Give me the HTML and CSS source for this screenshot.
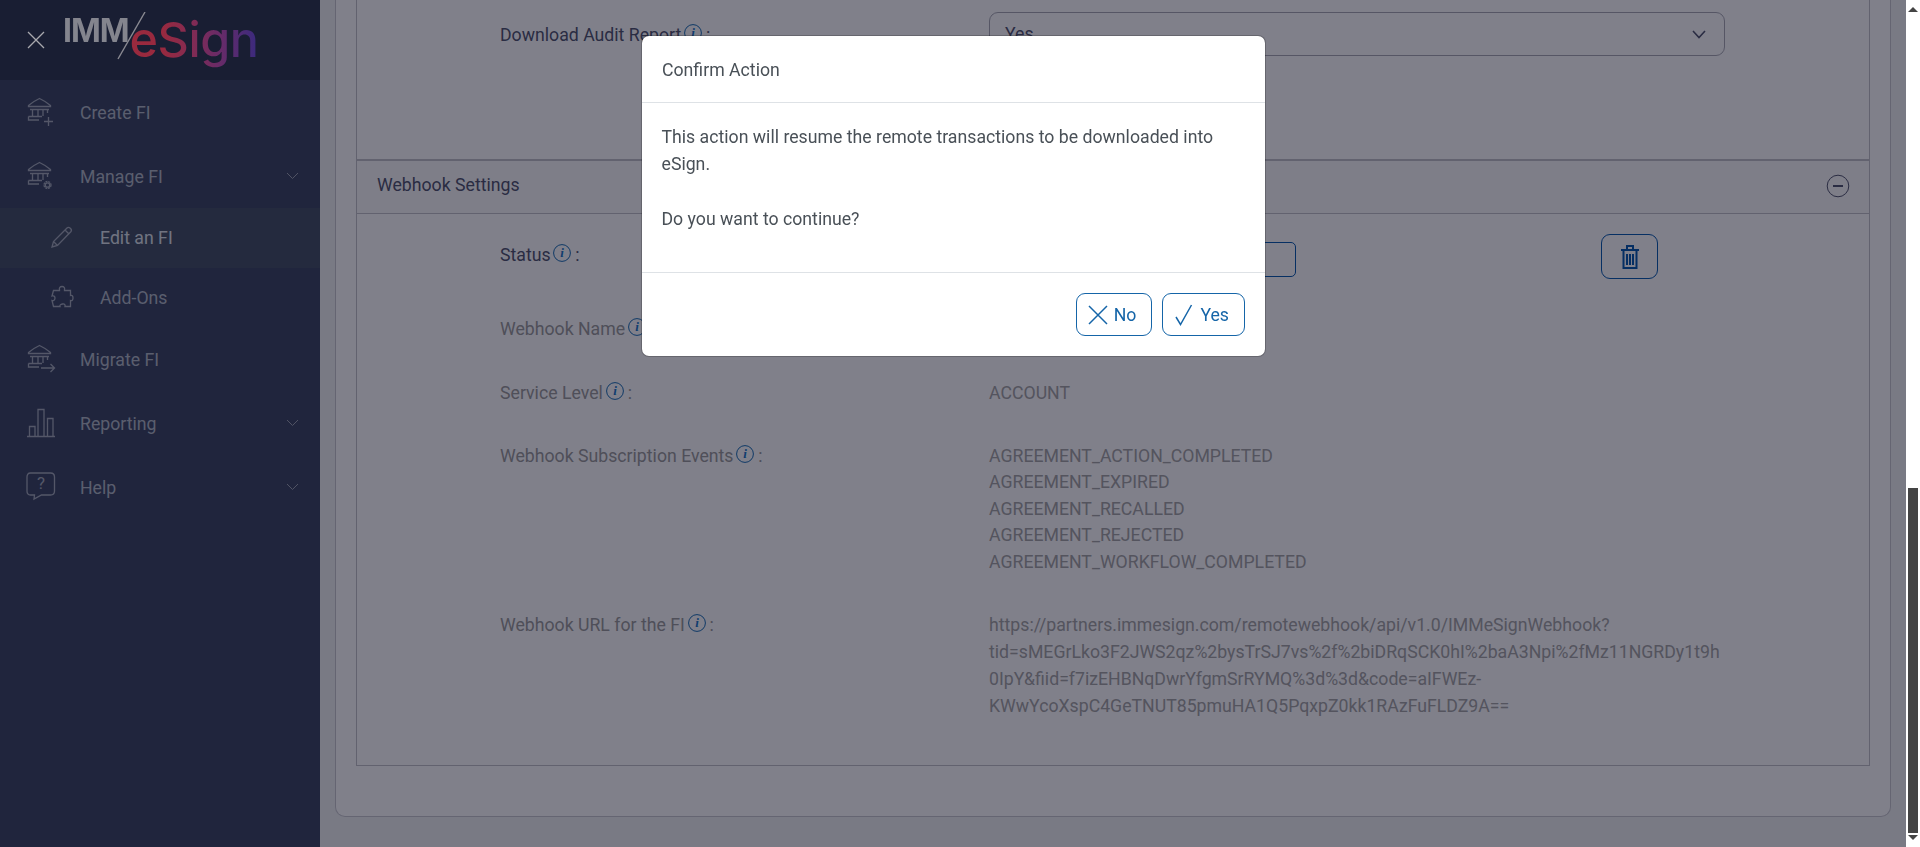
FILE: index.html
```html
<!DOCTYPE html>
<html lang="en">
<head>
<meta charset="utf-8">
<title>IMM eSign - Edit an FI</title>
<link rel="stylesheet" href="styles.css">
</head>
<body>
<svg class="defs" width="0" height="0" aria-hidden="true">
  <defs>
    <g id="bank" fill="none" stroke="currentColor" stroke-width="1.3">
      <path d="M2.5 8.5C5 6.5 9 3.5 13.5 1.5 18 3.5 22 6.5 24.5 8.5V9.5H2.5Z"/>
      <path d="M4 12.5H23M6.5 12.5V19M12 12.5V19M17 12.5V19M21.5 12.5V16"/>
      <path d="M2.5 19.5H16M2.5 19.5V23H13"/>
    </g>
    <g id="info-glyph">
      <circle cx="9" cy="9" r="8.4" fill="none" stroke="#1b6fb5" stroke-width="1"/>
      <text x="9" y="13" class="info-i">i</text>
    </g>
  </defs>
</svg>
<div class="app">
  <aside class="sidebar">
    <header class="brand">
      <svg class="close-x" width="18" height="18" viewBox="0 0 18 18"><path d="M1 1L17 17M17 1L1 17"/></svg>
      <div class="logo">
        <span class="logo-imm">IMM</span>
        <svg class="logo-slash" width="30" height="50" viewBox="0 0 30 50"><path d="M28 0L1 47"/></svg>
        <span class="logo-esign">eSign</span>
      </div>
    </header>
    <nav class="nav">
      <a class="nav-item">
        <svg class="nav-icon" width="30" height="30" viewBox="0 0 30 30"><use href="#bank"/><path class="st" d="M22.500 20V29M18 24.500H27"/></svg>
        <span class="nav-label">Create FI</span>
      </a>
      <a class="nav-item">
        <svg class="nav-icon" width="30" height="30" viewBox="0 0 30 30"><use href="#bank"/><circle class="st" cx="21.500" cy="24" r="3.500" stroke-width="2.400" stroke-dasharray="2 .8"/><circle class="st" cx="21.500" cy="24" r="2.200"/></svg>
        <span class="nav-label">Manage FI</span>
        <svg class="chev" width="13" height="8" viewBox="0 0 13 8"><path d="M1 1L6.500 6.500L12 1"/></svg>
      </a>
      <a class="nav-item sub active">
        <svg class="nav-icon" width="24" height="24" viewBox="0 0 24 24"><path class="st" d="M2 22L3.500 16.500L17 3C19 1.200 22.500 4.500 21 6.500L7.500 20.500ZM3.500 16.500L7.500 20.500M15 5L19 9"/></svg>
        <span class="nav-label">Edit an FI</span>
      </a>
      <a class="nav-item sub short">
        <svg class="nav-icon" width="24" height="24" viewBox="0 0 24 24"><path class="st" d="M9.500 4.500C9 3 10 1.500 12 1.500S15 3 14.500 4.500V5.500H20.500V10.500C22 10 23 11 23 13S22 16 20.500 15.500V21.500H15C15.500 20 14.500 18.500 12.500 19S9.500 20 10 21.500H3.500L2 15.500C3.500 16 5 15 5 13S3.500 10.500 2 11L3.500 5.500H9.500Z"/></svg>
        <span class="nav-label">Add-Ons</span>
      </a>
      <a class="nav-item">
        <svg class="nav-icon" width="30" height="30" viewBox="0 0 30 30"><use href="#bank"/><path class="st" d="M15 24H28.500M24.500 20L28.500 24L24.500 28"/></svg>
        <span class="nav-label">Migrate FI</span>
      </a>
      <a class="nav-item">
        <svg class="nav-icon" width="30" height="30" viewBox="0 0 30 30"><path class="st" d="M1 28.500H29M3.500 28.500V18.500H9V28.500M12 28.500V1.500H18V28.500M21.500 28.500V10.500H27V28.500"/></svg>
        <span class="nav-label">Reporting</span>
        <svg class="chev" width="13" height="8" viewBox="0 0 13 8"><path d="M1 1L6.500 6.500L12 1"/></svg>
      </a>
      <a class="nav-item">
        <svg class="nav-icon" width="30" height="30" viewBox="0 0 30 30"><path class="st" d="M4.500 1H24.500C27 1 28.500 2.500 28.500 5V19C28.500 21.500 27 23 24.500 23H15.500L8 27L8.500 23H4.500C2 23 1 21.500 1 19V5C1 2.500 2 1 4.500 1Z"/><text x="15" y="17" class="help-q">?</text></svg>
        <span class="nav-label">Help</span>
        <svg class="chev" width="13" height="8" viewBox="0 0 13 8"><path d="M1 1L6.500 6.500L12 1"/></svg>
      </a>
    </nav>
  </aside>

  <main class="main">
    <section class="card">
      <div class="panel">
        <div class="audit">
          <div class="row">
            <div class="label strong">Download Audit Report <svg class="info" width="18" height="18" viewBox="0 0 18 18"><use href="#info-glyph"/></svg> :</div>
            <div class="select"><span>Yes</span><svg class="select-chev" width="14" height="9" viewBox="0 0 14 9"><path d="M1 1L7 7.500L13 1"/></svg></div>
          </div>
        </div>
        <div class="panel-head">
          <span>Webhook Settings</span>
          <svg class="collapse" width="24" height="24" viewBox="0 0 24 24"><circle cx="12" cy="12" r="10.800"/><path d="M7 12H17"/></svg>
        </div>
        <div class="panel-body">
          <div class="row status-row">
            <div class="label strong">Status <svg class="info" width="18" height="18" viewBox="0 0 18 18"><use href="#info-glyph"/></svg> :</div>
            <div class="status-value">
              <div class="status-box"></div>
              <button class="trash" type="button" aria-label="Delete">
                <svg width="20" height="26" viewBox="0 0 20 26"><path d="M1 6H19M7 6V2H13V6M3.500 6.500V24H16.500V6.500M7 10V21M10 10V21M13 10V21"/></svg>
              </button>
            </div>
          </div>
          <div class="row gap-name">
            <div class="label">Webhook Name <svg class="info" width="18" height="18" viewBox="0 0 18 18"><use href="#info-glyph"/></svg> :</div>
            <div class="value"></div>
          </div>
          <div class="row gap-service">
            <div class="label">Service Level <svg class="info" width="18" height="18" viewBox="0 0 18 18"><use href="#info-glyph"/></svg> :</div>
            <div class="value">ACCOUNT</div>
          </div>
          <div class="row gap-events">
            <div class="label">Webhook Subscription Events <svg class="info" width="18" height="18" viewBox="0 0 18 18"><use href="#info-glyph"/></svg> :</div>
            <div class="value events">AGREEMENT_ACTION_COMPLETED<br>AGREEMENT_EXPIRED<br>AGREEMENT_RECALLED<br>AGREEMENT_REJECTED<br>AGREEMENT_WORKFLOW_COMPLETED</div>
          </div>
          <div class="row gap-url">
            <div class="label">Webhook URL for the FI <svg class="info" width="18" height="18" viewBox="0 0 18 18"><use href="#info-glyph"/></svg> :</div>
            <div class="value url">https://partners.immesign.com/remotewebhook/api/v1.0/IMMeSignWebhook?tid=sMEGrLko3F2JWS2qz%2bysTrSJ7vs%2f%2biDRqSCK0hI%2baA3Npi%2fMz11NGRDy1t9h0IpY&amp;fiid=f7izEHBNqDwrYfgmSrRYMQ%3d%3d&amp;code=aIFWEz-KWwYcoXspC4GeTNUT85pmuHA1Q5PqxpZ0kk1RAzFuFLDZ9A==</div>
          </div>
        </div>
      </div>
    </section>
  </main>

  <div class="scrollbar">
    <span class="arrow up"></span>
    <div class="track"><div class="thumb"></div></div>
    <span class="arrow down"></span>
  </div>

  <div class="backdrop">
    <div class="modal" role="dialog">
      <div class="modal-head">Confirm Action</div>
      <div class="modal-body">
        <p>This action will resume the remote transactions to be downloaded into eSign.</p>
        <p>Do you want to continue?</p>
      </div>
      <div class="modal-foot">
        <button class="btn" type="button"><svg width="20" height="20" viewBox="0 0 20 20"><path d="M1 1L19 19M19 1L1 19"/></svg>No</button>
        <button class="btn" type="button"><svg width="20" height="22" viewBox="0 0 18 22"><path d="M1 13L5.500 20.500L16.500 1"/></svg>Yes</button>
      </div>
    </div>
  </div>
</div>
</body>
</html>
```
FILE: styles.css
```css
* { box-sizing: border-box; }
html, body { margin: 0; height: 100%; overflow: hidden; }
body { font-family: Roboto, "Liberation Sans", sans-serif; font-size: 17.7px; line-height: 27px; color: #a9a9a9; background: #fff; }
.defs { position: absolute; }

.app { display: flex; height: 847px; width: 1920px; }

/* Sidebar */
.sidebar { width: 320px; flex: none; background: #3f4965; color: #b3bbc7; }
.brand { height: 80px; background: #313b51; display: flex; align-items: flex-start; padding-left: 27px; }
.close-x { position: relative; z-index: 1; margin-top: 31px; fill: none; stroke: #a8a9ae; stroke-width: 1.3; flex: none; }
.logo { position: relative; z-index: 1; display: flex; align-items: flex-start; margin-left: 18px; height: 80px; }
.logo-imm { font-family: Inter, Roboto, sans-serif; font-weight: 700; font-size: 32px; line-height: 32px; margin-top: 15px; color: #84858e; letter-spacing: -1px; }
.logo-slash { margin: 12px 0 0 -12px; fill: none; stroke: #8a8a92; stroke-width: 1.4; flex: none; }
.logo-esign { font-family: Inter, Roboto, sans-serif; font-weight: 500; font-size: 48.5px; line-height: 60px; margin: 10px 0 0 -17px; letter-spacing: -.5px;
  background: linear-gradient(90deg, #9a2a3e 0%, #98293f 25%, #862b50 45%, #682b68 70%, #3a2a7e 100%); -webkit-background-clip: text; background-clip: text; color: transparent; }

.nav { display: flex; flex-direction: column; }
.nav-item { height: 64px; display: flex; align-items: center; padding-left: 26px; position: relative; }
.nav-item.sub { height: 60px; padding-left: 50px; padding-bottom: 2px; }
.nav-item.short { height: 59px; padding-bottom: 1px; }
.nav-item.active { background: #475367; color: #dfe5eb; }
.nav-label { padding-top: 2px; }
.nav-icon { flex: none; margin-right: 24px; color: #a6adbb; }
.nav-item.sub .nav-icon { margin-right: 26px; }
.st { fill: none; stroke: #a6adbb; stroke-width: 1.3; }
.help-q { font-family: Roboto, sans-serif; font-size: 17px; text-anchor: middle; fill: #a6adbb; }
.chev { margin-left: auto; margin-right: 21px; fill: none; stroke: #9ea5b3; stroke-width: 1; }

/* Main */
.main { flex: 1; background: #f1f3f3; padding: 0 15px 30px 15px; min-width: 0; }
.card { height: 817px; background: #fff; border: 1px solid #c8c8cf; border-top: 0; border-radius: 0 0 10px 10px; padding: 0 20px; }
.panel { border: 1px solid #c3c3c9; border-top: 0; height: 766px; }
.audit { height: 161px; padding-top: 12px; border-bottom: 2px solid #c3c3c9; }
.row { display: grid; grid-template-columns: 489px 736px; padding-left: 143px; }
.label { color: #9c9c9c; white-space: nowrap; }
.label.strong { color: #535770; }
.audit .label { margin-top: 10px; }
.info { vertical-align: -1px; margin: 0 -.5px 0 -1.5px; }
.info-i { font-family: "Liberation Serif", serif; font-style: italic; font-weight: 700; font-size: 13px; text-anchor: middle; fill: #1d78c8; }

.select { height: 44px; border: 1px solid #aaabb5; border-radius: 9px; display: flex; align-items: center; justify-content: space-between; padding: 0 18px 0 15px; color: #535770; }
.select-chev { fill: none; stroke: #535770; stroke-width: 1.6; }

.panel-head { height: 53px; border-bottom: 1px solid #c3c3c9; background: #fbfbfb; display: flex; align-items: center; justify-content: space-between; padding: 0 19px 4px 20px; color: #535770; }
.collapse { fill: none; stroke: #535770; stroke-width: 1; margin-top: 1px; }
.collapse path { stroke-width: 2; }

.panel-body { padding-top: 20px; }
.value { color: #a6a6a6; }
.status-row { height: 44px; align-items: center; }
.status-row .label { margin-top: -1px; }
.status-value { position: relative; display: flex; height: 44px; }
.status-box { width: 307px; height: 35px; margin-top: 8px; border: 1px solid #0a5cb0; border-radius: 5px; }
.trash { margin-left: 305px; width: 57px; height: 45px; border: 1px solid #0a5cb0; border-radius: 9px; background: transparent; padding: 0; display: flex; align-items: center; justify-content: center; }
.trash svg { fill: none; stroke: #0a5cb0; stroke-width: 2; }
.gap-name { margin-top: 38px; }
.gap-service { margin-top: 37px; }
.gap-events { margin-top: 36px; }
.gap-url { margin-top: 37px; }
.events { line-height: 26.4px; }
.url { overflow-wrap: anywhere; }

/* Fake window scrollbar */
.scrollbar { width: 14px; flex: none; background: #fff; display: flex; flex-direction: column; align-items: center; position: relative; z-index: 5; }
.track { flex: 1; width: 100%; padding-top: 474px; display: flex; justify-content: center; }
.thumb { width: 10px; height: 345px; background: #444; }
.arrow { flex: none; width: 0; height: 0; border-left: 5px solid transparent; border-right: 5px solid transparent; }
.arrow.up { border-bottom: 5px solid #444; margin-top: 7px; margin-bottom: 2px; }
.arrow.down { border-top: 5px solid #444; margin-bottom: 7px; margin-top: 2px; }

/* Modal */
.backdrop { position: fixed; left: 0; top: 0; width: 1906px; height: 847px; background: rgba(1, 1, 21, .5); }
.modal { position: absolute; left: 641px; top: 35px; width: 625px; height: 322px; background: #fff; border-radius: 8px; border: 1px solid rgba(0,0,0,.2); display: flex; flex-direction: column; color: #495057; background-clip: padding-box; }
.modal-head { height: 67px; padding: 21px 20px 0; border-bottom: 1px solid #dee2e6; }
.modal-body { height: 170px; padding: 21px 19.500px 0; border-bottom: 1px solid #dee2e6; }
.modal-body p { margin: 0 0 28px; }
.modal-foot { flex: 1; display: flex; justify-content: flex-end; align-items: flex-start; gap: 10px; padding: 20px 20px 0 0; }
.btn { height: 43px; display: flex; align-items: center; gap: 6px; padding: 2px 15px 0 11px; font: inherit; color: #1565a8; background: #fff; border: 1px solid #1565a8; border-radius: 9px; }
.btn svg { fill: none; stroke: #1565a8; stroke-width: 1.5; flex: none; margin-top: -2px; }
```
